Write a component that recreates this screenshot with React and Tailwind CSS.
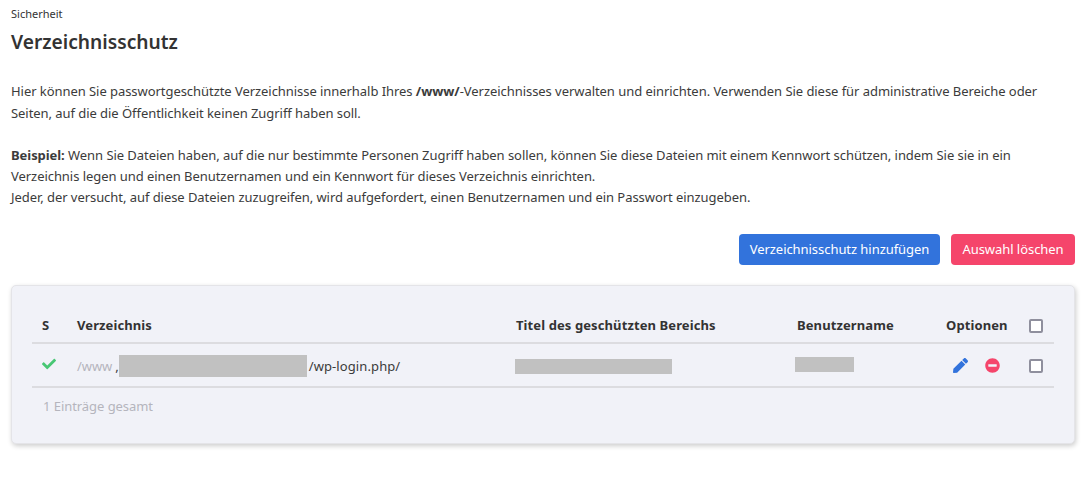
import React from 'react';
import { FaPen, FaMinusCircle, FaCheck } from 'react-icons/fa';

const rowGrid = 'grid grid-cols-[35px_439px_281px_149px_83px_35px] items-center';

const Checkbox = () => (
    <span className='block size-[14px] rounded-[2px] border-2 border-[#8f8f9d] bg-white'></span>
);

const App = () => {
    return (
        <div className='min-h-screen bg-white pl-[11px] pr-[12px] pt-[7px] text-[13px] leading-[21px] tracking-[-0.055px] text-[#3b3b3b] font-["Noto_Sans",sans-serif]'>
            <div className='text-[11px] leading-[14px] tracking-normal text-[#333]'>Sicherheit</div>
            <h1 className='mt-[6px] text-[19.2px] leading-[30px] tracking-normal font-semibold text-[#333]'>Verzeichnisschutz</h1>

            <div className='mt-[23px]'>
                <p className='leading-[22px]'>
                    Hier können Sie passwortgeschützte Verzeichnisse innerhalb Ihres <b>/www/</b>-Verzeichnisses verwalten und einrichten. Verwenden Sie diese für administrative Bereiche oder Seiten, auf die die Öffentlichkeit keinen Zugriff haben soll.
                </p>
                <p className='mt-[21px]'>
                    <b>Beispiel:</b> Wenn Sie Dateien haben, auf die nur bestimmte Personen Zugriff haben sollen, können Sie diese Dateien mit einem Kennwort schützen, indem Sie sie in ein Verzeichnis legen und einen Benutzernamen und ein Kennwort für dieses Verzeichnis einrichten.
                    <br />
                    Jeder, der versucht, auf diese Dateien zuzugreifen, wird aufgefordert, einen Benutzernamen und ein Passwort einzugeben.
                </p>
            </div>

            <div className='mt-[26px] flex justify-end gap-[11px]'>
                <button className='h-[31px] w-[201px] rounded-[4px] bg-[#3273dc] text-[13px] text-white'>Verzeichnisschutz hinzufügen</button>
                <button className='h-[31px] w-[124px] rounded-[4px] bg-[#f5456b] text-[13px] text-white'>Auswahl löschen</button>
            </div>

            {/* Table panel */}
            <div className='mt-[20px] h-[159px] w-[1064px] rounded-[5px] border border-[#e4e4e8] bg-[#f1f2f8] px-[20px] pt-[21px] shadow-[1px_2px_5px_rgba(0,0,0,0.2)]'>
                <div className={`${rowGrid} h-[37px] border-b-2 border-[#dcdce0] pt-[2px] font-bold tracking-[0.1px] text-[#333]`}>
                    <div className='pl-[10px]'>S</div>
                    <div className='pl-[10px]'>Verzeichnis</div>
                    <div className='pl-[10px]'>Titel des geschützten Bereichs</div>
                    <div className='pl-[10px]'>Benutzername</div>
                    <div className='pl-[10px]'>Optionen</div>
                    <div className='pl-[10px]'><Checkbox /></div>
                </div>

                <div className={`${rowGrid} h-[44px] border-b-2 border-[#dcdce0] pt-[2px]`}>
                    <div className='pl-[10px]'><FaCheck className='mb-[4px] size-[14px] text-[#48c774]' /></div>
                    <div className='flex items-center pl-[10px]'>
                        <span className='text-[#b5b5bd]'>/www</span>
                        <span className='ml-[3px]'>,</span>
                        <span className='h-[22px] w-[188px] bg-[#c1c1c1]'></span>
                        <span className='ml-[2px] tracking-[0.1px]'>/wp-login.php/</span>
                    </div>
                    <div className='pl-[9px]'><div className='h-[15px] w-[157px] bg-[#c1c1c1]'></div></div>
                    <div className='pl-[8px]'><div className='mb-[4px] h-[15px] w-[59px] bg-[#c1c1c1]'></div></div>
                    <div className='flex items-center gap-[17px] pl-[17px]'>
                        <FaPen className='mb-[1px] size-[15px] text-[#3273dc]' />
                        <FaMinusCircle className='mb-[1px] size-[15px] text-[#f5456b]' />
                    </div>
                    <div className='pl-[10px]'><Checkbox /></div>
                </div>

                <div className='mt-[8px] pl-[11px] text-[#b5b5bd]'>1 Einträge gesamt</div>
            </div>
        </div>
    );
};

export default App;
